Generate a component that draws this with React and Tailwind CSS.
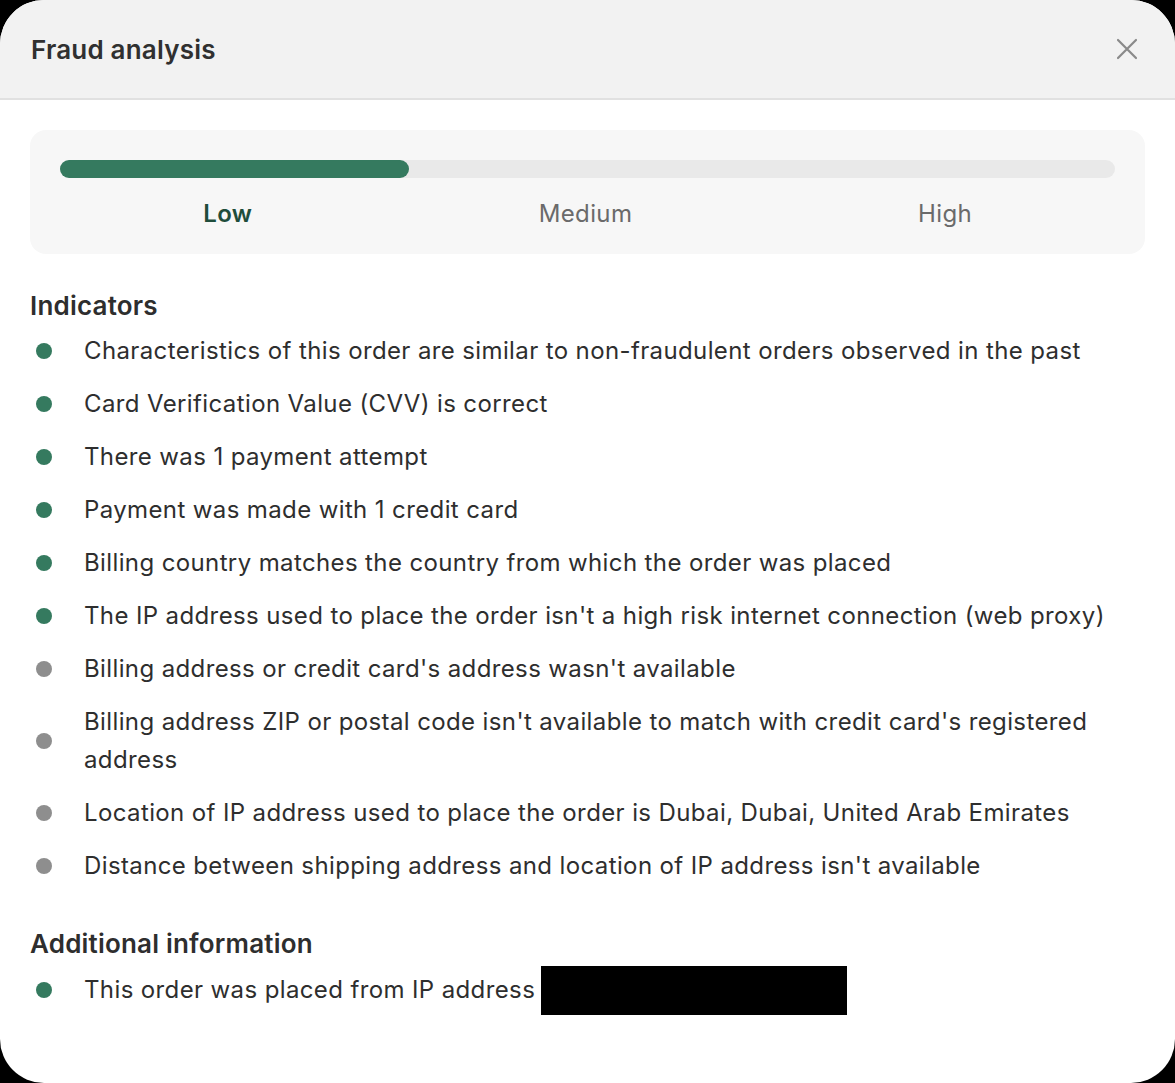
const indicators = [
  { ok: true, text: "Characteristics of this order are similar to non-fraudulent orders observed in the past" },
  { ok: true, text: "Card Verification Value (CVV) is correct" },
  { ok: true, text: "There was 1 payment attempt" },
  { ok: true, text: "Payment was made with 1 credit card" },
  { ok: true, text: "Billing country matches the country from which the order was placed" },
  { ok: true, text: "The IP address used to place the order isn't a high risk internet connection (web proxy)" },
  { ok: false, text: "Billing address or credit card's address wasn't available" },
  { ok: false, text: "Billing address ZIP or postal code isn't available to match with credit card's registered address" },
  { ok: false, text: "Location of IP address used to place the order is Dubai, Dubai, United Arab Emirates" },
  { ok: false, text: "Distance between shipping address and location of IP address isn't available" },
];

function Item({ ok, children }) {
  return (
    <li className="flex items-center">
      <span className={`w-4 h-4 rounded-full shrink-0 ml-[6px] mr-[32px] ${ok ? "bg-[#357a5f]" : "bg-[#8e8e8e]"}`} />
      <span className="leading-[38px]">{children}</span>
    </li>
  );
}

export default function App() {
  return (
    <div className="min-h-screen bg-black font-['Inter',sans-serif] text-[#2e2e2e]">
      <div className="w-[1175px] h-[1083px] bg-white rounded-[44px] overflow-hidden flex flex-col">
        {/* Header */}
        <div className="h-[100px] shrink-0 bg-[#f2f2f2] border-b-2 border-[#e1e1e1] flex items-center justify-between pl-[31px] pr-[36px]">
          <h1 className="text-[26px] font-semibold text-[#303030] tracking-[0.2px]">Fraud analysis</h1>
          <svg width="24" height="24" viewBox="0 0 24 24" fill="none" stroke="#8a8a8a" strokeWidth="2.2" strokeLinecap="round">
            <path d="M3 3L21 21M21 3L3 21" />
          </svg>
        </div>

        <div className="px-[30px] pt-[30px]">
          {/* Risk level */}
          <div className="bg-[#f7f7f7] rounded-[16px] px-[30px] pt-[30px] pb-[25px]">
            <div className="h-[18px] rounded-full bg-[#e9e9e9]">
              <div className="h-full w-[349px] rounded-full bg-[#357a5f]" />
            </div>
            <div className="grid grid-cols-3 text-[24px] tracking-[0.38px] mt-[21px] leading-[30px]">
              <div className="text-center font-semibold text-[#1f4d3b] pr-[16px]">Low</div>
              <div className="text-center text-[#6a6a6a] pr-[4px]">Medium</div>
              <div className="text-center text-[#6a6a6a] pl-[12px]">High</div>
            </div>
          </div>

          {/* Indicators */}
          <h2 className="text-[26px] font-semibold text-[#2e2e2e] tracking-[0.2px] mt-[37px] leading-[30px]">Indicators</h2>
          <ul className="text-[24px] tracking-[0.38px] mt-[11px] flex flex-col gap-[15px]">
            {indicators.map((it, i) => (
              <Item key={i} ok={it.ok}>{it.text}</Item>
            ))}
          </ul>

          <h2 className="text-[26px] font-semibold text-[#2e2e2e] tracking-[0.2px] mt-[44px] leading-[30px]">Additional information</h2>
          <ul className="text-[24px] tracking-[0.38px] mt-[12px]">
            <li className="flex items-center h-[38px]">
              <span className="w-4 h-4 rounded-full shrink-0 ml-[6px] mr-[32px] bg-[#357a5f]" />
              <span className="leading-[38px]">This order was placed from IP address</span>
              <span className="ml-[6px] w-[306px] h-[49px] shrink-0 bg-black" />
            </li>
          </ul>
        </div>
      </div>
    </div>
  );
}
